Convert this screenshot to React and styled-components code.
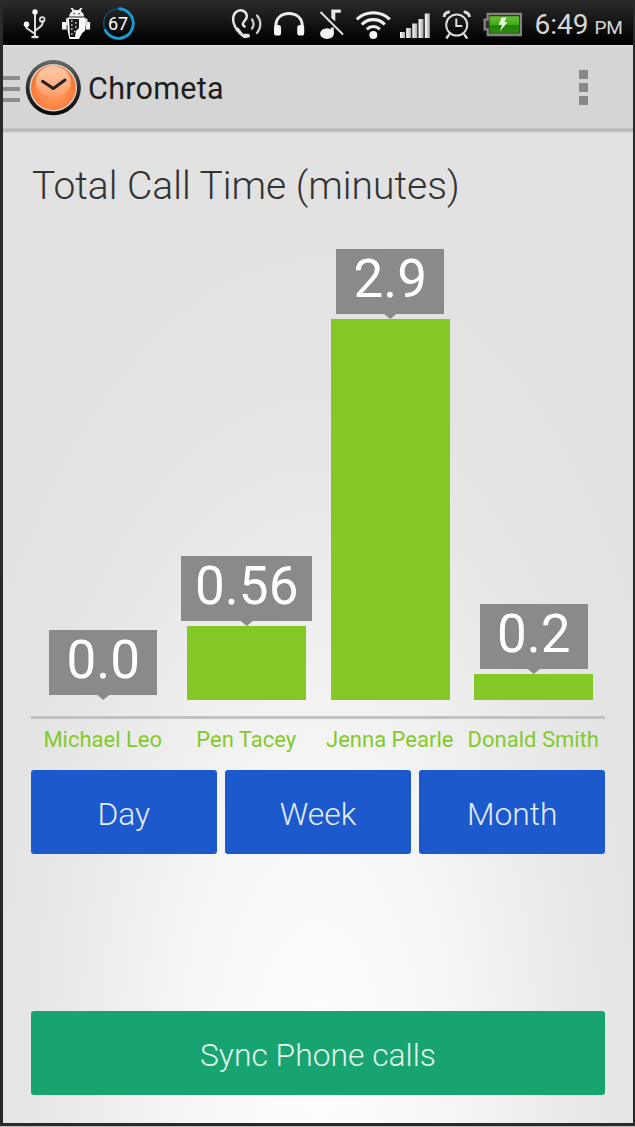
import React from 'react';
import styled, { createGlobalStyle } from 'styled-components';

const GlobalStyle = createGlobalStyle`
  * { box-sizing: border-box; }
  body { margin: 0; background: #bdbdbd; font-family: Roboto, "Noto Sans", sans-serif; }
`;

const Phone = styled.div`
  width: 635px;
  height: 1126px;
  display: flex;
  flex-direction: column;
  border: solid #29292a;
  border-width: 0 2px 3px 3px;
  background: radial-gradient(ellipse 400px 840px at 315px 1060px, #fefefe 0%, #f8f8f8 28%, #ececec 58%, #e4e4e4 80%, #e2e2e2 100%);
`;

const StatusBar = styled.header`
  height: 45px;
  flex: none;
  display: flex;
  align-items: flex-start;
  background: linear-gradient(#2b2b2a, #171717 45%, #000 92%);
  color: #d6d6d6;
  svg { flex: none; display: block; }
`;

const Glyph = styled.svg`
  width: ${p => p.$w}px;
  height: 45px;
  margin-left: ${p => p.$gap}px;
`;

const Charge = styled.div`
  width: 34px;
  height: 45px;
  margin-left: 9px;
  display: grid;
  place-items: center;
  & > * { grid-area: 1 / 1; }
`;

const ChargeText = styled.span`
  font: 400 18px/20px Roboto, sans-serif;
  color: #fff;
  padding-top: 2px;
`;

const Clock = styled.div`
  margin-left: 11px;
  padding-top: 8px;
  font-size: 28px;
  line-height: 34px;
  white-space: nowrap;
`;

const Meridiem = styled.span`
  font-size: 19px;
  margin-left: 6px;
  letter-spacing: -0.3px;
`;

const ActionBar = styled.nav`
  height: 88px;
  flex: none;
  display: flex;
  align-items: center;
  padding-bottom: 3px;
  border-top: 1px solid #e4e4e4;
  background: linear-gradient(#d5d5d5 82px, #b5b5b5 83px, #bcbcbc 85px, #d9d9d9 87px, #e0e0e0 88px);
`;

const Drawer = styled.div`
  width: 17px;
  height: 26px;
  margin-top: 2px;
  margin-right: 5px;
  display: flex;
  flex-direction: column;
  justify-content: space-between;
  span { height: 4px; background: #8b8b8b; }
`;

const AppTitle = styled.h1`
  flex: 1;
  margin: 0 0 0 7px;
  font-size: 30.5px;
  font-weight: 400;
  color: #1e1e1e;
  letter-spacing: 0.3px;
`;

const Overflow = styled.button`
  width: 9px;
  height: 35px;
  margin: 0 45px 1px 0;
  padding: 0;
  border: 0;
  background: none;
  display: flex;
  flex-direction: column;
  justify-content: space-between;
  span { width: 9px; height: 9px; background: #888; }
`;

const Content = styled.main`
  flex: 1;
  display: flex;
  flex-direction: column;
  padding: 28px 28px 28px 28px;
`;

const Heading = styled.h2`
  margin: 0;
  height: 48px;
  padding-left: 1px;
  font-size: 39px;
  line-height: 50px;
  font-weight: 300;
  color: #333;
  white-space: nowrap;
`;

const Chart = styled.section`
  height: 510px;
  display: grid;
  grid-template-columns: repeat(4, 143.5px);
  align-items: end;
  padding-bottom: 16px;
  border-bottom: 3px solid #c2c2c2;
`;

const Column = styled.div`
  display: flex;
  flex-direction: column;
  align-items: center;
  padding-left: 1px;
`;

const Bubble = styled.div`
  height: 65px;
  padding: 0 14px;
  min-width: 108px;
  text-align: center;
  background: #8a8a8a;
  color: #fff;
  font-size: 53px;
  line-height: 60px;
`;

const Pointer = styled.div`
  width: 12px;
  height: 5px;
  background: #8a8a8a;
  clip-path: polygon(0 0, 100% 0, 50% 100%);
`;

const Bar = styled.div`
  width: 119px;
  background: #84c727;
`;

const Names = styled.div`
  height: 51px;
  display: grid;
  grid-template-columns: repeat(4, 143.5px);
  padding-top: 8px;
`;

const Name = styled.span`
  text-align: center;
  font-size: 22px;
  line-height: 26px;
  color: #84c92c;
  white-space: nowrap;
`;

const Ranges = styled.div`
  display: flex;
  gap: 8.5px;
`;

const Button = styled.button`
  flex: 1 1 0;
  height: 84px;
  padding: 2px 0 0;
  border: 0;
  border-radius: 3px;
  background: #1b59cd;
  color: #e6ebf6;
  font: 300 31.8px/84px Roboto, sans-serif;
`;

const SyncButton = styled(Button)`
  flex: none;
  margin-top: auto;
  background: #18a470;
  color: #e2f3ec;
`;

const people = [
  { name: 'Michael Leo', value: '0.0' },
  { name: 'Pen Tacey', value: '0.56' },
  { name: 'Jenna Pearle', value: '2.9' },
  { name: 'Donald Smith', value: '0.2' },
];
const MAX = 381;
const barHeight = v => Math.round((Number(v) / 2.9) * MAX);

const ClockLogo = () => (
  <svg width="56" height="58" viewBox="25 59 56 58" style={{ flex: 'none' }}>
    <defs>
      <linearGradient id="rim" x1="0" y1="0" x2="0" y2="1">
        <stop offset="0" stopColor="#6a6a6a" />
        <stop offset="0.45" stopColor="#303030" />
        <stop offset="1" stopColor="#080808" />
      </linearGradient>
      <radialGradient id="face" cx="0.5" cy="0.55" r="0.5">
        <stop offset="0" stopColor="#ff9c61" />
        <stop offset="0.75" stopColor="#ff8748" />
        <stop offset="1" stopColor="#f9742f" />
      </radialGradient>
      <linearGradient id="gloss" x1="0" y1="0" x2="0" y2="1">
        <stop offset="0" stopColor="#ffd8bf" />
        <stop offset="1" stopColor="#ff9f69" />
      </linearGradient>
    </defs>
    <circle cx="53.3" cy="87.7" r="27.6" fill="url(#rim)" />
    <circle cx="53.3" cy="87.7" r="23.8" fill="#d8d0c9" />
    <circle cx="53.3" cy="87.7" r="22.3" fill="url(#face)" />
    <ellipse cx="53.3" cy="81.5" rx="17.5" ry="15.5" fill="url(#gloss)" opacity="0.85" />
    <path d="M42.5 81.3 53.3 88.5 65 80" fill="none" stroke="#272220" strokeWidth="3" strokeLinecap="round" strokeLinejoin="round" />
  </svg>
);

const StatusIcons = () => (
  <>
    <Glyph $w={26} $gap={19} viewBox="22 0 26 45" fill="none" stroke="#dedede" strokeWidth="2">
      <path d="M35 11V36M26.5 25v3l8.5 6M42.5 20v3.5c0 3-4 4-7.5 7.5" />
      <path d="M31.5 37h7" strokeWidth="2.4" />
      <circle cx="35" cy="12" r="2.7" fill="#fff" stroke="none" />
      <circle cx="26.5" cy="24.2" r="2.8" fill="#fff" stroke="none" />
      <circle cx="42.2" cy="19.5" r="2.4" strokeWidth="1.6" />
    </Glyph>
    <Glyph $w={32} $gap={12} viewBox="60 0 32 45">
      <path d="M69 16.5c.4-3 2-4.500 3.500-5.300L70.500 8h2l2 2h4l2-2h2l-1.800 3.200c2 1 3.200 2.800 3.400 5.300z" fill="#eee" />
      <path d="M67.500 17.500h17.500V31c-2 1-3 2-4 4l-2 4h-9.500l-1-4-1-5z" fill="#fff" />
      <path d="M69 19h10v9l-3 3-1 6h-5z" fill="#1a1a1a" />
      <path d="M71 21h1.6m2.4 2h1.6M71 25h1.6m2.4 2h1.6M71 29h1.6m1.4 2.5h1.6M71 34h1.6" stroke="#ccc" strokeWidth="1.4" />
      <rect x="62" y="22" width="4.6" height="7.5" fill="#f2f2f2" />
      <rect x="85.5" y="22" width="4.6" height="7.5" fill="#f2f2f2" />
      <path d="M66 18.5l2-.5v7l-2 .5zM85 18l2.5 1v6l-2.5 1z" fill="#ddd" />
      <path d="M73.5 13.6h1.3M78.5 13.6h1.3" stroke="#222" strokeWidth="1.3" />
    </Glyph>
    <Charge>
      <svg width="34" height="45" viewBox="101 0 34 45" fill="none">
        <circle cx="118.5" cy="23.5" r="14.8" stroke="#154c68" strokeWidth="1.5" />
        <path d="M118.5 8.7a14.8 14.8 0 1 1-13.6 20.7" stroke="#149bd5" strokeWidth="2.9" />
      </svg>
      <ChargeText>67</ChargeText>
    </Charge>
    <Glyph $w={32} $gap={95} viewBox="230 0 32 45" fill="none" stroke="#e5e5e5" strokeLinecap="round">
      <path d="M246 36c-4-.5-8.500-4.500-11-9.500-3-6-2.500-12 1.500-14.800 4.500-3 10-.5 10.300 4.300.2 4-4 5.500-4 8 0 1 .7 2 1.800 2.500" strokeWidth="2.5" />
      <path d="M237.500 29l4 5.500 3.500 2.300" strokeWidth="3" />
      <path d="M244.500 35.700h3.500" strokeWidth="4" />
      <path d="M252 19.500c2 2.800 2 6.200 0 9M257 15.500c4.400 5 4.400 12 0 17.500" strokeWidth="2.2" stroke="#cfcfcf" />
    </Glyph>
    <Glyph $w={34} $gap={9.5} viewBox="272 0 34 45" fill="none" stroke="#ededed">
      <path d="M275.800 28v-2c0-8 5.800-12.500 13.200-12.500S302.300 18 302.300 26v2" strokeWidth="3" />
      <rect x="274" y="25" width="7" height="10.5" rx="2.6" fill="#f6f6f6" stroke="none" />
      <rect x="297.200" y="25" width="7" height="10.5" rx="2.6" fill="#f6f6f6" stroke="none" />
    </Glyph>
    <Glyph $w={28} $gap={12} viewBox="318 0 28 45" fill="none">
      <path d="M331.300 18v-8.500h9.500v3.300h-5.500V21.500zM330.800 27.500h3v6h-3z" fill="#e8e8e8" />
      <ellipse cx="327" cy="33.600" rx="6.900" ry="5.300" fill="#f4f4f4" />
      <path d="M320.500 12 343 34.500" stroke="#e2e2e2" strokeWidth="1.9" />
    </Glyph>
    <Glyph $w={38} $gap={9} viewBox="355 0 38 45" fill="none" stroke="#f0f0f0" strokeWidth="3.1">
      <path d="M356.800 19.300c9-8.700 24-8.700 33 0M361.800 24.500c6.500-6.500 16.500-6.500 23 0M366.800 29.300c4-3.700 9.300-3.700 13 0" />
      <circle cx="373.300" cy="35" r="4" fill="#f6f6f6" stroke="none" />
    </Glyph>
    <Glyph $w={32} $gap={6} viewBox="399 0 32 45">
      <defs>
        <linearGradient id="sig" x1="0" x2="1" y1="0" y2="0">
          <stop offset="0" stopColor="#fff" />
          <stop offset="1" stopColor="#a9a9a9" />
        </linearGradient>
      </defs>
      {[[400, 32], [406.2, 28], [412.3, 23.5], [418.5, 19], [424.8, 13.5]].map(([x, y]) => (
        <rect key={x} x={x} y={y} width="5" height={38 - y} fill="url(#sig)" />
      ))}
    </Glyph>
    <Glyph $w={30} $gap={11} viewBox="442 0 30 45" fill="none" stroke="#dcdcdc" strokeWidth="2">
      <circle cx="456.700" cy="25" r="10.5" />
      <path d="M456.300 18.500V26h6" />
      <path d="M449.500 34l-3.200 4.500M464 34l3.200 4.500" strokeWidth="2.3" />
      <path d="M444 17c.3-3 2.500-5 5.800-5.300M469.500 17c-.3-3-2.500-5-5.800-5.300" strokeWidth="3" />
    </Glyph>
    <Glyph $w={42} $gap={10} viewBox="482 0 42 45">
      <defs>
        <linearGradient id="cell" x1="0" x2="0" y1="0" y2="1">
          <stop offset="0" stopColor="#62c52c" />
          <stop offset="0.5" stopColor="#43a81b" />
          <stop offset="0.52" stopColor="#238209" />
          <stop offset="1" stopColor="#2d8d10" />
        </linearGradient>
      </defs>
      <path d="M486.500 12.700H522v23.600h-35.500v-5.800h-3v-12h3z" fill="#828282" />
      <path d="M488.800 15h31v18.500h-31v-5.200h-3v-7.500h3z" fill="#333" />
      <rect x="489.500" y="16.300" width="29.500" height="16.500" fill="url(#cell)" />
      <path d="M501.500 17.500h5l-2 4.700h3l-7.700 9 2.300-6.500h-3.500z" fill="#e9fbd8" />
    </Glyph>
    <Clock>6:49<Meridiem>PM</Meridiem></Clock>
  </>
);

export default function App() {
  return (
    <>
      <GlobalStyle />
      <Phone>
        <StatusBar><StatusIcons /></StatusBar>
        <ActionBar>
          <Drawer><span /><span /><span /></Drawer>
          <ClockLogo />
          <AppTitle>Chrometa</AppTitle>
          <Overflow aria-label="More options"><span /><span /><span /></Overflow>
        </ActionBar>
        <Content>
          <Heading>Total Call Time (minutes)</Heading>
          <Chart>
            {people.map(p => (
              <Column key={p.name}>
                <Bubble>{p.value}</Bubble>
                <Pointer />
                <Bar style={{ height: barHeight(p.value) }} />
              </Column>
            ))}
          </Chart>
          <Names>
            {people.map(p => <Name key={p.name}>{p.name}</Name>)}
          </Names>
          <Ranges>
            <Button>Day</Button>
            <Button>Week</Button>
            <Button>Month</Button>
          </Ranges>
          <SyncButton>Sync Phone calls</SyncButton>
        </Content>
      </Phone>
    </>
  );
}
